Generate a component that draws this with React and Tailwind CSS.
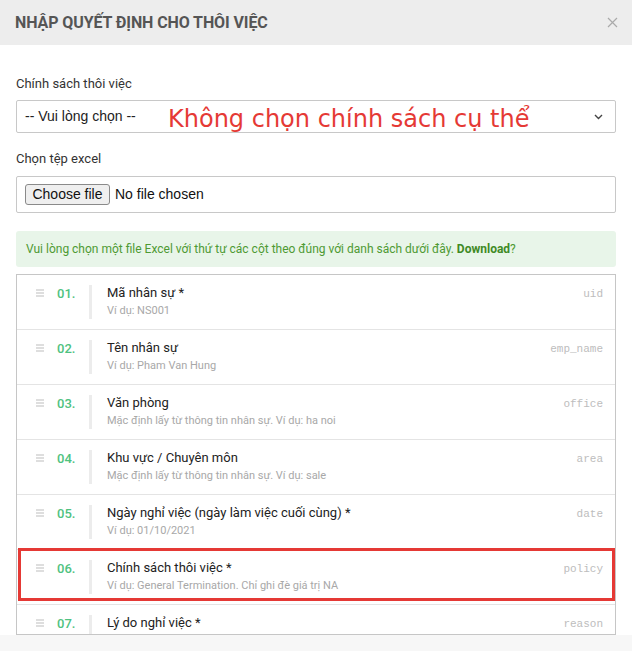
import React from "react";

const rows = [
  { n: "01.", t: "Mã nhân sự *", s: "Ví dụ: NS001", c: "uid" },
  { n: "02.", t: "Tên nhân sự", s: "Ví dụ: Pham Van Hung", c: "emp_name" },
  { n: "03.", t: "Văn phòng", s: "Mặc định lấy từ thông tin nhân sự. Ví dụ: ha noi", c: "office" },
  { n: "04.", t: "Khu vực / Chuyên môn", s: "Mặc định lấy từ thông tin nhân sự. Ví dụ: sale", c: "area" },
  { n: "05.", t: "Ngày nghỉ việc (ngày làm việc cuối cùng) *", s: "Ví dụ: 01/10/2021", c: "date" },
  { n: "06.", t: "Chính sách thôi việc *", s: "Ví dụ: General Termination. Chỉ ghi đè giá trị NA", c: "policy" },
  { n: "07.", t: "Lý do nghỉ việc *", s: "", c: "reason" },
];

function Handle() {
  return (
    <svg width="8" height="8" viewBox="0 0 8 8" className="block">
      <rect x="0" y="0.5" width="8" height="1" fill="#bdbdbd" />
      <rect x="0" y="3.5" width="8" height="1" fill="#bdbdbd" />
      <rect x="0" y="6.5" width="8" height="1" fill="#bdbdbd" />
    </svg>
  );
}

function Row({ r }) {
  return (
    <div className="flex h-[55px] shrink-0 border-b border-[#e4e4e4]">
      <div className="ml-[19px] w-[21px] pt-[14px]">
        <Handle />
      </div>
      <div className="w-[32px] pt-[10px] text-[13px] leading-[18px] font-medium text-[#4fc280]">{r.n}</div>
      <div className="mt-[10px] h-[34px] w-[3px] bg-[#ececec]" />
      <div className="ml-[15px] flex-1 pt-[9px]">
        <div className="text-[13px] leading-[18px] text-[#222]">{r.t}</div>
        {r.s ? <div className="mt-[1px] text-[11px] leading-[16px] text-[#a8a8a8]">{r.s}</div> : null}
      </div>
      <div className="pr-[12px] pt-[10px] font-['Liberation_Mono',monospace] text-[11px] leading-[18px] text-[#bdbdbd]">{r.c}</div>
    </div>
  );
}

export default function App() {
  return (
    <div className="w-[632px] h-[651px] overflow-hidden bg-[#f7f7f7] font-['Roboto',sans-serif]">
      <div className="flex h-[45px] items-center justify-between bg-[#ededed] pl-[15px] pr-[14px]">
        <div className="text-[16px] font-bold tracking-[-0.1px] text-[#555]">NHẬP QUYẾT ĐỊNH CHO THÔI VIỆC</div>
        <svg width="11" height="11" viewBox="0 0 11 11">
          <path d="M1 1L10 10M10 1L1 10" stroke="#aaa" strokeWidth="1.2" />
        </svg>
      </div>
      <div className="bg-white px-4 pt-[30px]">
        <div className="text-[13px] leading-[18px] text-[#333]">Chính sách thôi việc</div>
        <div className="relative mt-[7px] flex h-[33px] items-center justify-between rounded-[2px] border border-[#c8c8c8] pl-[8px] pr-[12px]">
          <span className="font-['Liberation_Sans',sans-serif] text-[14px] text-[#222]">-- Vui lòng chọn --</span>
          <svg width="9" height="6" viewBox="0 0 9 6">
            <path d="M1 1L4.5 4.5L8 1" fill="none" stroke="#444" strokeWidth="1.4" />
          </svg>
          <span className="absolute left-[151px] top-[3px] font-['DejaVu_Sans',sans-serif] text-[24px] leading-[30px] text-[#e53935]">
            Không chọn chính sách cụ thể
          </span>
        </div>
        <div className="mt-[17px] text-[13px] leading-[18px] text-[#333]">Chọn tệp excel</div>
        <div className="mt-[8px] flex h-[37px] items-center rounded-[2px] border border-[#c8c8c8] pl-[8px]">
          <span className="flex h-[21px] w-[85px] items-center justify-center rounded-[3px] border border-[#8a8a8a] bg-[#efefef] font-['Liberation_Sans',sans-serif] text-[14px] text-[#111]">
            Choose file
          </span>
          <span className="ml-[5px] font-['Liberation_Sans',sans-serif] text-[14px] text-[#111]">No file chosen</span>
        </div>
        <div className="mt-[18px] flex h-[36px] items-center rounded-[3px] bg-[#e8f5e9] pl-[10px] text-[12px] text-[#4e9a33]">
          <span>
            Vui lòng chọn một file Excel với thứ tự các cột theo đúng với danh sách dưới đây.{" "}
            <b className="font-bold text-[#3f8a25]">Download</b>?
          </span>
        </div>
        <div className="relative mt-[7px] flex h-[361px] flex-col overflow-hidden border border-[#c6c6c6]">
          {rows.map((r) => (
            <Row key={r.n} r={r} />
          ))}
          <div className="absolute left-[1px] right-0 top-[273px] h-[53px] border-[3px] border-[#e53935]" />
        </div>
      </div>
    </div>
  );
}
